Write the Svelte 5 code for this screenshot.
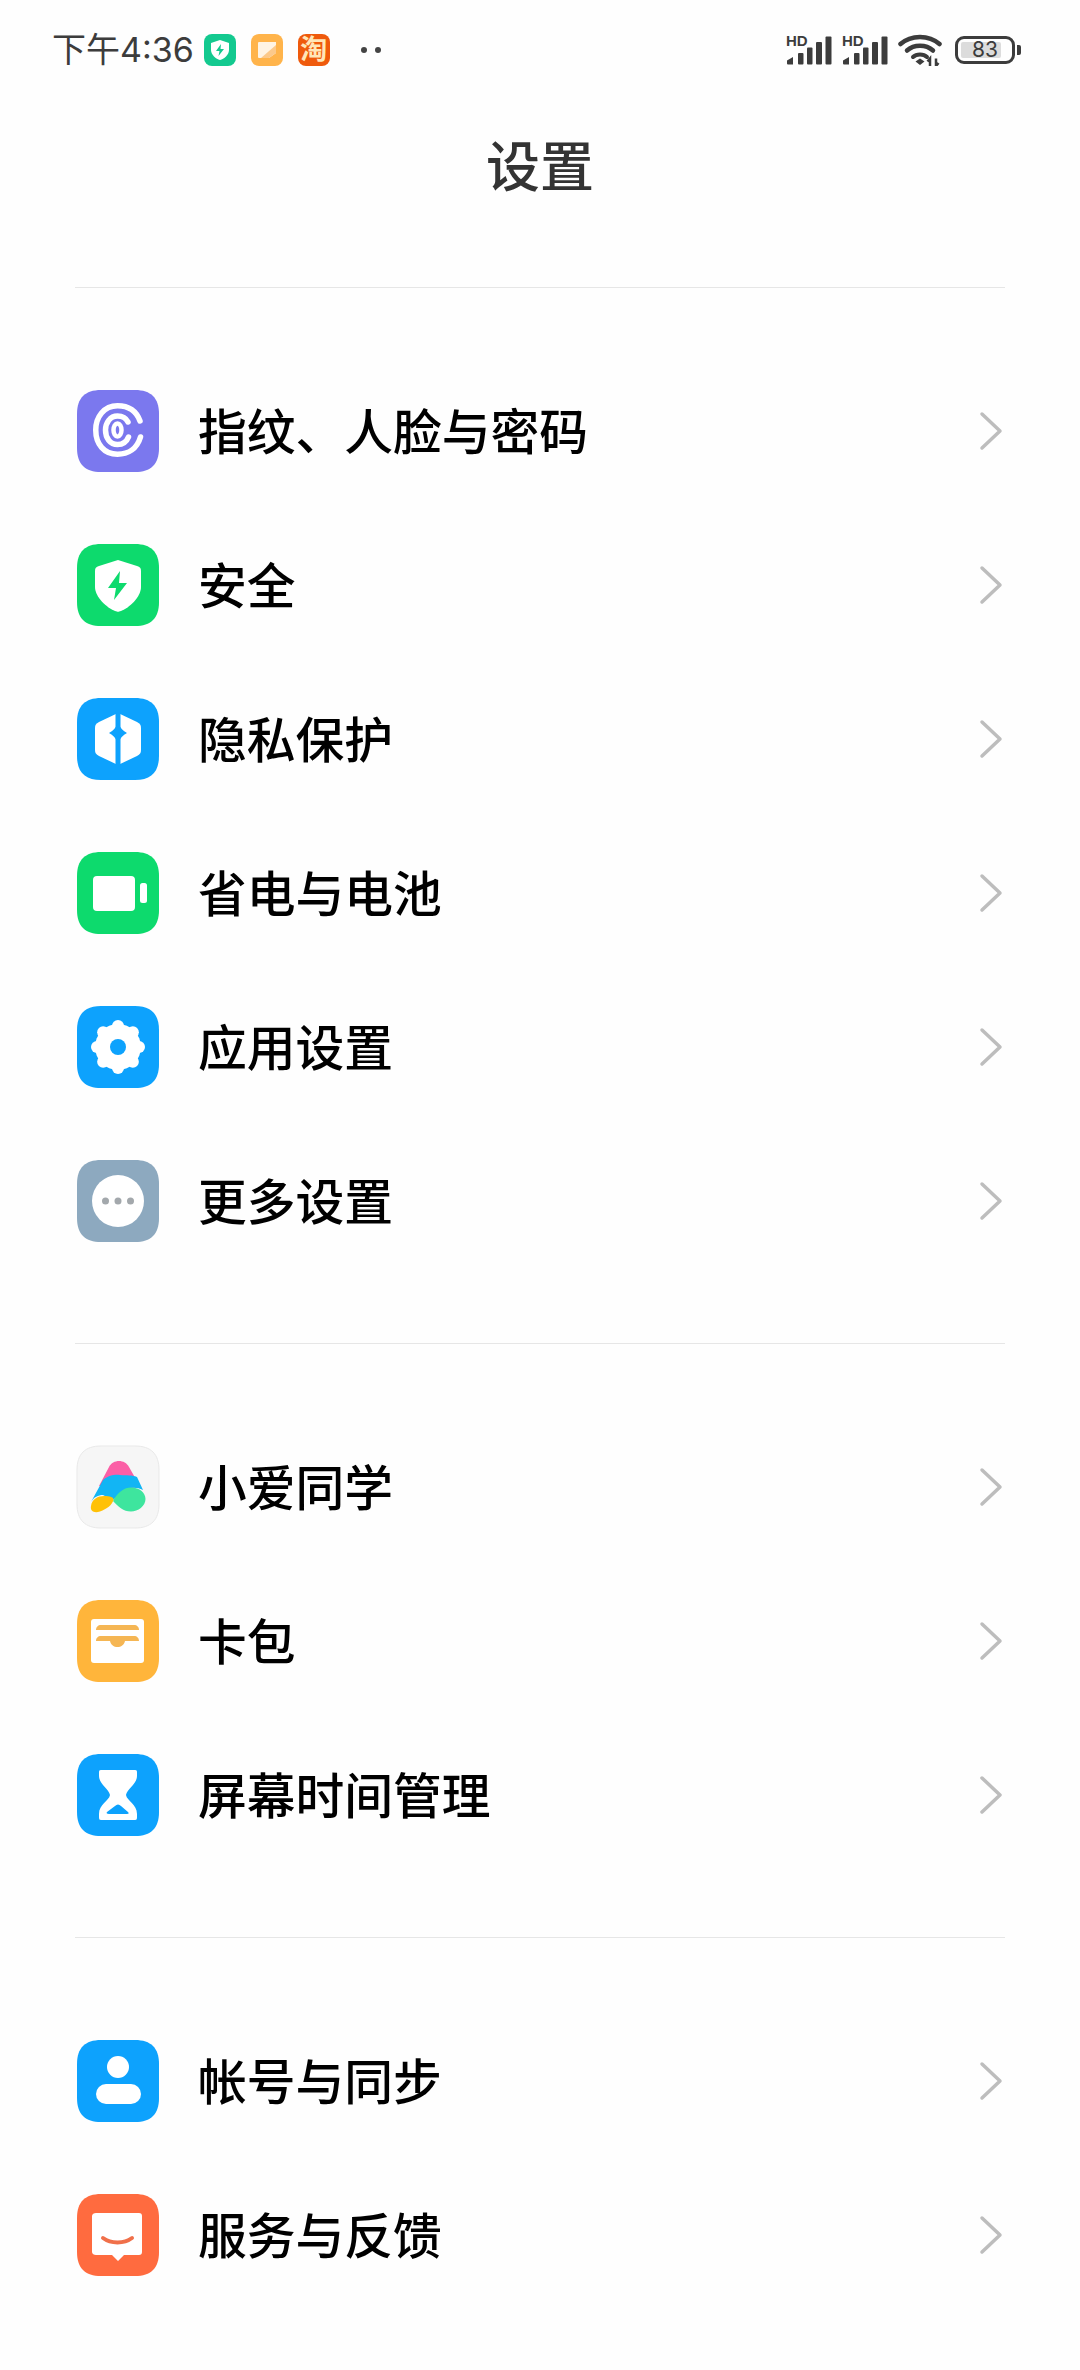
<script lang="ts">
  const sections = [
    [
      { label: '指纹、人脸与密码', icon: 'finger' },
      { label: '安全', icon: 'shield' },
      { label: '隐私保护', icon: 'privacy' },
      { label: '省电与电池', icon: 'battery' },
      { label: '应用设置', icon: 'gear' },
      { label: '更多设置', icon: 'more' },
    ],
    [
      { label: '小爱同学', icon: 'xiaoai' },
      { label: '卡包', icon: 'wallet' },
      { label: '屏幕时间管理', icon: 'hourglass' },
    ],
    [
      { label: '帐号与同步', icon: 'account' },
      { label: '服务与反馈', icon: 'service' },
    ],
  ];

  const tileColors: Record<string, string> = {
    finger: '#7b78ee',
    shield: '#0dda6d',
    privacy: '#0da2fd',
    battery: '#0dda6d',
    gear: '#0da2fd',
    more: '#8da9bf',
    xiaoai: '#f6f6f6',
    wallet: '#ffb53b',
    hourglass: '#0da2fd',
    account: '#0da2fd',
    service: '#ff6b3f',
  };

  const tile = 'M24 0H58C74 0 82 8 82 24V58C82 74 74 82 58 82H24C8 82 0 74 0 58V24C0 8 8 0 24 0Z';

  // bumps of the gear, one every 45 degrees
  const lobes = [-90, -45, 0, 45, 90, 135, 180, 225].map((deg) => ({
    x: 41 + 21 * Math.cos((deg * Math.PI) / 180),
    y: 41 + 21 * Math.sin((deg * Math.PI) / 180),
  }));
</script>

{#snippet signal()}
  <span class="signal">
    <span class="hd">HD</span>
    <svg width="46" height="30" viewBox="0 0 46 30">
      <path d="M2 29.500a1 1 0 0 1-1-1v-3l6-3.500v7.500z" fill="#3c3c3c" />
      <rect x="12" y="18" width="5.500" height="11.500" rx="1" fill="#3c3c3c" />
      <rect x="21" y="12.500" width="5.500" height="17" rx="1" fill="#3c3c3c" />
      <rect x="30" y="7" width="6" height="22.500" rx="1" fill="#3c3c3c" />
      <rect x="39.500" y="1.500" width="6" height="28" rx="1" fill="#3c3c3c" />
    </svg>
  </span>
{/snippet}

{#snippet appIcon(name: string)}
  <svg class="app-icon" width="82" height="82" viewBox="0 0 82 82">
    <path d={tile} fill={tileColors[name]} stroke={name === 'xiaoai' ? '#e9e9e9' : 'none'} />
    {#if name === 'finger'}
      <g fill="none" stroke="#fff" stroke-linecap="round">
        <path d="M63 31C59 20 50 15.750 40.500 15.750C27 15.750 18.750 27 18.750 40C18.750 54 27 64.250 40.500 64.250C51 64.250 60 59 63.500 47" stroke-width="5.500" />
        <path d="M51 32C49 28 45 26 40.500 26C33 26 28.500 33 28.500 40C28.500 48 33 54.500 40.500 54.500C45 54.500 49.500 52 51.500 47" stroke-width="5.500" />
        <ellipse cx="40.500" cy="40" rx="4" ry="6.500" stroke-width="4.500" />
      </g>
    {:else if name === 'shield'}
      <path d="M41 16L60 22C63 23 64 24 64 27V43C64 53 52 64 44 67C41 68 41 68 38 67C30 64 18 53 18 43V27C18 24 19 23 22 22Z" fill="#fff" />
      <path d="M43 27L31 44H39L37 56L50 39H42Z" fill="#0dda6d" />
    {:else if name === 'privacy'}
      <path d="M41 15L60 24C63 25.500 64 27 64 30V52C64 55 63 56.500 60 58L41 67L22 58C19 56.500 18 55 18 52V30C18 27 19 25.500 22 24Z" fill="#fff" />
      <rect x="38.500" y="12" width="5" height="58" fill="#0da2fd" />
      <path d="M41 25Q44 32 50 35Q44 38 41 45Q38 38 32 35Q38 32 41 25Z" fill="#0da2fd" />
    {:else if name === 'battery'}
      <rect x="16" y="24" width="42" height="35" rx="4" fill="#fff" />
      <rect x="63" y="31" width="7" height="20" rx="2.500" fill="#fff" />
    {:else if name === 'gear'}
      <circle cx="41" cy="41" r="23" fill="#fff" />
      {#each lobes as lobe}
        <circle cx={lobe.x} cy={lobe.y} r="6" fill="#fff" />
      {/each}
      <circle cx="41" cy="41" r="8" fill="#0da2fd" />
    {:else if name === 'more'}
      <circle cx="41" cy="41" r="26" fill="#fff" />
      <circle cx="28.500" cy="41" r="3.500" fill="#a3a8ac" />
      <circle cx="41" cy="41" r="3.500" fill="#a3a8ac" />
      <circle cx="53.500" cy="41" r="3.500" fill="#a3a8ac" />
    {:else if name === 'xiaoai'}
      <path d="M22 40L32 21C36 13 48 13 52 21L64 42Z" fill="#fb5fa6" />
      <path d="M14 56L26 34C32 29 38 28.500 43 29C50 29.500 55 29 60 31L66 44C58 40 50 42 46 46L36 54L26 49C21 49 17 51 14 56Z" fill="#12b5f4" />
      <path d="M36 55C41 46 47 41.500 54 41.500C63 41.500 68.500 47 68.500 53C68.500 60 61 65.500 54 65.500C46 65.500 42 61 36 55Z" fill="#3ee59e" />
      <path d="M14 60C15 53 21 50 27 50C33 50 37 51 36.500 54C35 59 30 63 23 65.500C17 67.500 13 65 14 60Z" fill="#ffc107" />
    {:else if name === 'wallet'}
      <rect x="14" y="19" width="53" height="44" rx="3" fill="#fff" />
      <path d="M19 30C19 27 21 25 24 25H57C60 25 62 27 62 30Z" fill="#f5b654" />
      <path d="M19 41C19 38 21 36 24 36H57C60 36 62 38 62 41H48C47 45 44 47 40.500 47C37 47 34 45 33 41Z" fill="#f5b654" />
    {:else if name === 'hourglass'}
      <path d="M24 16H58C60 16 60 17 60 19V22C60 30 50 35 49 41C50 47 60 50 60 60V63C60 66 59 66 57 66H25C23 66 22 66 22 63V60C22 50 32 47 33 41C32 35 22 30 22 22V19C22 17 22 16 24 16Z" fill="#fff" />
      <path d="M30 58L38 52C40 50 42 50 44 52L51 58C52 59 52 60 50 60H32C30 60 29 59 30 58Z" fill="#0da2fd" />
    {:else if name === 'account'}
      <circle cx="41" cy="27" r="11" fill="#fff" />
      <rect x="19" y="44" width="45" height="20" rx="10" fill="#fff" />
    {:else if name === 'service'}
      <path d="M19 19H62C64 19 65 20 65 22V58C65 60 64 61 62 61H47L41 67L35 61H19C17 61 15 60 15 58V22C15 20 17 19 19 19Z" fill="#fff" />
      <path d="M26 44C34 50 47 50 55 44" fill="none" stroke="#f0704a" stroke-width="4" stroke-linecap="round" />
    {/if}
  </svg>
{/snippet}

<div class="page">
  <div class="status-bar">
    <span class="time">下午4:36</span>
    <div class="notify">
      <svg width="32" height="32" viewBox="0 0 32 32">
        <rect width="32" height="32" rx="8" fill="#13c98f" />
        <path d="M16 6L25 9V16C25 21 20 25 16 26C12 25 7 21 7 16V9Z" fill="#fff" />
        <path d="M17 10L12 17H15.500L14.500 22L20 15H16.500Z" fill="#13c98f" />
      </svg>
      <svg width="32" height="32" viewBox="0 0 32 32">
        <rect width="32" height="32" rx="8" fill="#ffb44b" />
        <path d="M7 9Q7 8 8 8H25V19L18 24H8Q7 24 7 23Z" fill="#fff" opacity="0.85" />
        <path d="M25 11V19L18 24H10Z" fill="#fcc98a" />
      </svg>
      <span class="tao">淘</span>
      <span class="dots"><i></i><i></i></span>
    </div>
    <div class="system">
      {@render signal()}
      {@render signal()}
      <svg class="wifi" width="44" height="32" viewBox="0 0 44 32">
        <path d="M2.500 10C13 0.500 31 0.500 41.500 10" fill="none" stroke="#3c3c3c" stroke-width="4.500" stroke-linecap="round" />
        <path d="M9 16.500C16 10 28 10 35 16.500" fill="none" stroke="#3c3c3c" stroke-width="4.500" stroke-linecap="round" />
        <path d="M15 23C18.500 19.500 25.500 19.500 29 23" fill="none" stroke="#3c3c3c" stroke-width="4" stroke-linecap="round" />
        <path d="M17.500 27.500L22 24.500L26.500 27.500L22 31Z" fill="#3c3c3c" />
        <path d="M32 32V24.500L29.500 27.500M38 24.500V32L40.500 29" fill="none" stroke="#3c3c3c" stroke-width="2.500" />
      </svg>
      <div class="battery">
        <span class="level"></span>
        <span class="pct">83</span>
      </div>
      <span class="nub"></span>
    </div>
  </div>

  <h1 class="title">设置</h1>

  {#each sections as rows}
    <section class="section">
      {#each rows as row}
        <div class="row">
          {@render appIcon(row.icon)}
          <span class="label">{row.label}</span>
          <svg class="chevron" width="24" height="40" viewBox="0 0 24 40">
            <path d="M3 3L21 20L3 37" fill="none" stroke="#bdbdbd" stroke-width="3.500" stroke-linecap="round" stroke-linejoin="round" />
          </svg>
        </div>
      {/each}
    </section>
  {/each}
</div>

<style>
  :global(body) {
    margin: 0;
    background: #fff;
  }

  .page {
    width: 1080px;
    height: 2370px;
    overflow: hidden;
    background: #fefefe;
    font-family: Inter, 'Noto Sans CJK SC', sans-serif;
  }

  .status-bar {
    height: 100px;
    padding: 0 59px 0 52px;
    display: flex;
    align-items: center;
    box-sizing: border-box;
  }

  .time {
    font-size: 34px;
    line-height: 100px;
    color: #3c3c3c;
    margin-right: 10px;
  }

  .notify {
    display: flex;
    align-items: center;
    gap: 15px;
  }

  .tao {
    width: 32px;
    height: 32px;
    border-radius: 8px;
    background: #ef5a0c;
    color: #ffe6b8;
    font-size: 27px;
    font-weight: 700;
    line-height: 32px;
    text-align: center;
  }

  .dots {
    display: flex;
    gap: 8px;
    margin-left: 16px;
  }

  .dots i {
    width: 6px;
    height: 6px;
    border-radius: 50%;
    background: #444;
  }

  .system {
    margin-left: auto;
    display: flex;
    align-items: center;
  }

  .signal {
    position: relative;
    width: 46px;
    height: 30px;
    margin-right: 10px;
    display: block;
  }

  .signal svg {
    display: block;
  }

  .hd {
    position: absolute;
    left: 0;
    top: -1px;
    font-family: 'Liberation Sans', sans-serif;
    font-size: 15px;
    line-height: 14px;
    font-weight: 700;
    color: #3c3c3c;
  }

  .wifi {
    margin: 0 13px 0 0;
  }

  .battery {
    position: relative;
    width: 60px;
    height: 28px;
    border: 3px solid #3c3c3c;
    border-radius: 9px;
    box-sizing: border-box;
    display: flex;
    align-items: center;
    justify-content: center;
  }

  .level {
    position: absolute;
    left: 3px;
    top: 3px;
    bottom: 3px;
    width: 40px;
    background: #dcdcdc;
    border-radius: 2px;
  }

  .pct {
    position: relative;
    font-size: 21px;
    color: #3c3c3c;
    line-height: 22px;
  }

  .nub {
    width: 4px;
    height: 10px;
    margin-left: 2px;
    background: #3c3c3c;
    border-radius: 0 2px 2px 0;
  }

  .title {
    margin: 0;
    height: 187px;
    padding-top: 30px;
    box-sizing: border-box;
    font-size: 54px;
    line-height: 76px;
    font-weight: 500;
    color: #333;
    text-align: center;
  }

  .section {
    margin: 0 75px;
    padding: 66px 0 65px;
    border-top: 1px solid #e6e6e6;
    width: 930px;
  }

  .row {
    height: 154px;
    display: flex;
    align-items: center;
  }

  .app-icon {
    flex: none;
    margin-left: 2px;
    overflow: visible;
  }

  .label {
    margin-left: 39px;
    padding-bottom: 5px;
    font-size: 48.750px;
    font-weight: 500;
    color: #000;
  }

  .chevron {
    margin-left: auto;
    margin-right: 2px;
  }
</style>
